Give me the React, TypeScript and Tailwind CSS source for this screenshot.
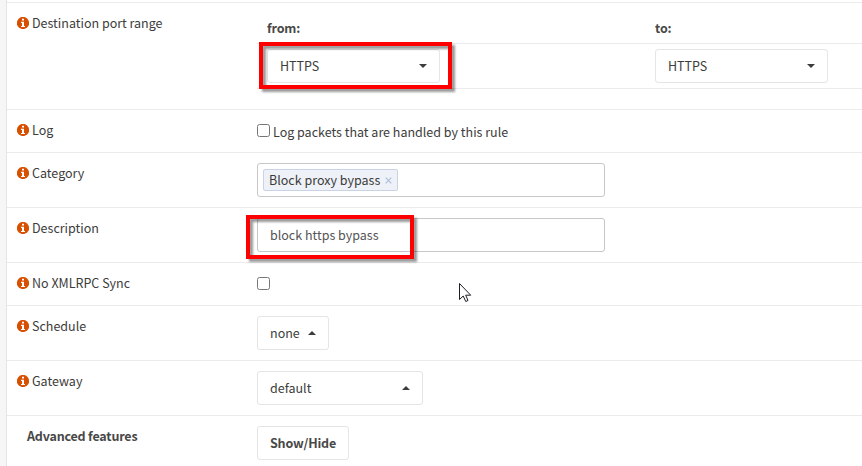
import type { ReactNode } from "react";

function InfoIcon() {
  return (
    <svg viewBox="0 0 12 12" className="mt-[5px] size-3 shrink-0">
      <circle cx="6" cy="6" r="6.1" fill="#d94f00" />
      <path d="M5 1.8H7V3.6H5ZM4 4.8H7V8.9H8V10H4V8.9H5V6H4Z" fill="white" />
    </svg>
  );
}

function Row({ label, height, children }: { label: string; height: string; children: ReactNode }) {
  return (
    <div className={`flex shrink-0 border-t border-[#ebebeb] ${height}`}>
      <div className="flex w-[250px] shrink-0 items-start gap-[3px] pl-2.5 pt-[9px]">
        <InfoIcon />
        <span className="pt-px">{label}</span>
      </div>
      <div className="min-w-0 flex-1">{children}</div>
    </div>
  );
}

function Caret({ up }: { up?: boolean }) {
  return (
    <svg viewBox="0 0 8 4" className="h-1 w-2 shrink-0 fill-[#3c3c3b]">
      <path d={up ? "M0 4L4 0L8 4Z" : "M0 0H8L4 4Z"} />
    </svg>
  );
}

function Select({ value, width, up }: { value: string; width: string; up?: boolean }) {
  return (
    <div
      className={`flex h-[34px] items-center justify-between rounded-[3px] border border-[#e5e5e5] bg-white pl-3 pr-3 ${width}`}
    >
      <span>{value}</span>
      <Caret up={up} />
    </div>
  );
}

function Highlight({ place }: { place: string }) {
  return (
    <div
      className={`pointer-events-none absolute border-4 border-[#fe0000] drop-shadow-[3px_3px_1px_rgba(0,0,0,0.4)] ${place}`}
    />
  );
}

export default function App() {
  return (
    <div className="relative flex h-[466px] w-[862px] overflow-hidden bg-white font-['Noto_Sans_CJK_SC',sans-serif] text-[12.5px] leading-5 text-[#3c3c3b]">
      <div className="w-[7px] shrink-0 border-r border-[#e5e5e5] bg-[#f6f6f6]" />
      <div className="flex min-w-0 flex-1 flex-col pt-0.5">
        <Row label="Destination port range" height="h-[107px]">
          <div className="grid h-10 grid-cols-[388px_1fr] pl-2.5 pt-[15px] font-bold tracking-[-0.15px] text-[#484847]">
            <span>from:</span>
            <span>to:</span>
          </div>
          <div className="grid h-[46px] grid-cols-[388px_1fr] border-y border-[#ebebeb] pl-2.5 pt-[5px]">
            <div className="relative">
              <Select value="HTTPS" width="w-[173px]" />
              <Highlight place="-left-2 -top-[7px] h-[47px] w-[193px]" />
            </div>
            <Select value="HTTPS" width="w-[173px]" />
          </div>
        </Row>
        <Row label="Log" height="h-[43px]">
          <label className="flex items-start gap-[3px] pt-3">
            <input type="checkbox" className="mt-0.5 size-[13px]" />
            <span>Log packets that are handled by this rule</span>
          </label>
        </Row>
        <Row label="Category" height="h-[55px]">
          <div className="mt-2.5 flex h-[34px] w-[348px] items-center rounded-[3px] border border-[#c7c7c7] px-[5px]">
            <div className="flex h-[22px] w-[135px] items-center justify-between rounded-[2px] border border-[#c9d3e6] bg-[#eef2f8] pl-[5px] pr-[5px]">
              <span>Block proxy bypass</span>
              <svg viewBox="0 0 7 7" className="size-[7px] fill-none stroke-[#adbfdb]">
                <path d="M.7.7l5.6 5.6M6.3.7L.7 6.3" strokeWidth="1.2" />
              </svg>
            </div>
          </div>
        </Row>
        <Row label="Description" height="h-[55px]">
          <div className="relative mt-2.5 flex h-[34px] w-[348px] items-center rounded-[3px] border border-[#c7c7c7] px-3 text-[#555]">
            <span>block https bypass</span>
            <Highlight place="-left-3 -top-1 h-11 w-[168px]" />
          </div>
        </Row>
        <Row label="No XMLRPC Sync" height="h-[43px]">
          <input type="checkbox" className="mt-3.5 block size-[13px]" />
        </Row>
        <Row label="Schedule" height="h-[55px]">
          <div className="pt-2.5">
            <Select value="none" width="w-[72px]" up />
          </div>
        </Row>
        <Row label="Gateway" height="h-[55px]">
          <div className="pt-2.5">
            <Select value="default" width="w-[166px]" up />
          </div>
        </Row>
        <div className="flex h-[51px] shrink-0 border-t border-[#ebebeb] font-bold tracking-[-0.18px] text-[#484847]">
          <div className="w-[250px] shrink-0 pl-5 pt-2.5">Advanced features</div>
          <button className="mt-2.5 flex h-[34px] w-[92px] items-center justify-center rounded-[3px] border border-[#e5e5e5]">
            Show/Hide
          </button>
        </div>
      </div>
      <svg viewBox="0 0 13 20" className="absolute left-[459px] top-[283px] h-5 w-[13px]">
        <path
          d="M.5.5V16.5L4.2 13L6.8 18.5L9 17.5L6.7 12.2H11.7Z"
          fill="white"
          stroke="#1d1d25"
        />
      </svg>
    </div>
  );
}
